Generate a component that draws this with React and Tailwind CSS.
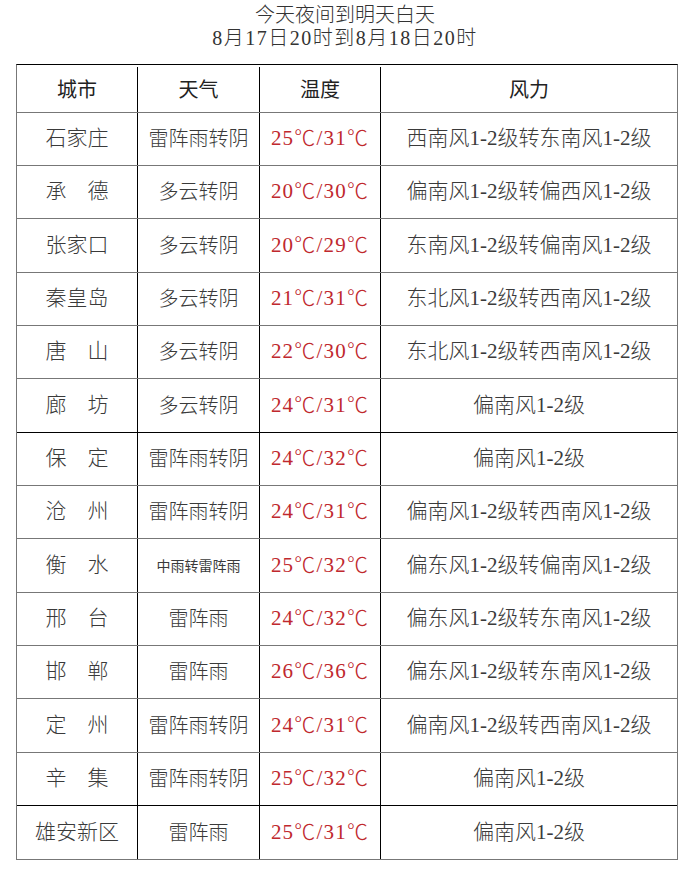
import React from "react";

const rows = [
  ["石家庄", "雷阵雨转阴", "25℃/31℃", "西南风1-2级转东南风1-2级"],
  ["承　德", "多云转阴", "20℃/30℃", "偏南风1-2级转偏西风1-2级"],
  ["张家口", "多云转阴", "20℃/29℃", "东南风1-2级转偏南风1-2级"],
  ["秦皇岛", "多云转阴", "21℃/31℃", "东北风1-2级转西南风1-2级"],
  ["唐　山", "多云转阴", "22℃/30℃", "东北风1-2级转西南风1-2级"],
  ["廊　坊", "多云转阴", "24℃/31℃", "偏南风1-2级"],
  ["保　定", "雷阵雨转阴", "24℃/32℃", "偏南风1-2级"],
  ["沧　州", "雷阵雨转阴", "24℃/31℃", "偏南风1-2级转西南风1-2级"],
  ["衡　水", "中雨转雷阵雨", "25℃/32℃", "偏东风1-2级转偏南风1-2级", true],
  ["邢　台", "雷阵雨", "24℃/32℃", "偏东风1-2级转东南风1-2级"],
  ["邯　郸", "雷阵雨", "26℃/36℃", "偏东风1-2级转东南风1-2级"],
  ["定　州", "雷阵雨转阴", "24℃/31℃", "偏南风1-2级转西南风1-2级"],
  ["辛　集", "雷阵雨转阴", "25℃/32℃", "偏南风1-2级"],
  ["雄安新区", "雷阵雨", "25℃/31℃", "偏南风1-2级"],
];

const serif = { fontFamily: '"Liberation Serif", "Noto Sans CJK SC", serif' };

export default function App() {
  return (
    <div
      className="w-[690px] h-[892px] bg-white text-[#3a3a3a]"
      style={serif}
    >
      <div className="pt-[4px] text-center text-[20px] leading-[23px] font-light text-[#333]">
        <div>今天夜间到明天白天</div>
        <div className="tracking-[1.5px]">8月17日20时到8月18日20时</div>
      </div>
      <div className="ml-[16px] mt-[14px] w-[662px] border-t border-t-black border-l border-l-[#777] border-r border-r-[#777]">
        <div className="flex h-[48px] border-b border-b-[#777] text-[20px] text-[#222] pt-[2px]">
          <div className="w-[121px] flex items-center justify-center border-r border-r-black">城市</div>
          <div className="w-[122px] flex items-center justify-center border-r border-r-black">天气</div>
          <div className="w-[121px] flex items-center justify-center border-r border-r-black">温度</div>
          <div className="flex-1 flex items-center justify-center">风力</div>
        </div>
        {rows.map((r, i) => {
          const tall = i === 2 || i === 5 || i === 8 || i === 11 || i === 13;
          const dark = i === 5 || i === 12;
          return (
            <div
              key={i}
              className={
                "flex border-b text-[20px] font-light " +
                (tall ? "h-[54px] " : "h-[53px] ") +
                (dark ? "border-b-black" : "border-b-[#777]")
              }
            >
              <div className="w-[121px] flex items-center justify-center border-r border-r-black text-[21px]">
                {r[0]}
              </div>
              <div
                className={
                  "w-[122px] flex items-center justify-center border-r border-r-black " +
                  (r[4] ? "text-[14px] font-normal" : "")
                }
                style={r[4] ? { fontFamily: '"Noto Sans CJK SC", sans-serif' } : undefined}
              >
                {r[1]}
              </div>
              <div className="w-[121px] flex items-center justify-center border-r border-r-black text-[21px] text-[#c0282e] tracking-[1.2px]">
                {r[2]}
              </div>
              <div className="flex-1 flex items-center justify-center text-[21px]">{r[3]}</div>
            </div>
          );
        })}
      </div>
    </div>
  );
}
